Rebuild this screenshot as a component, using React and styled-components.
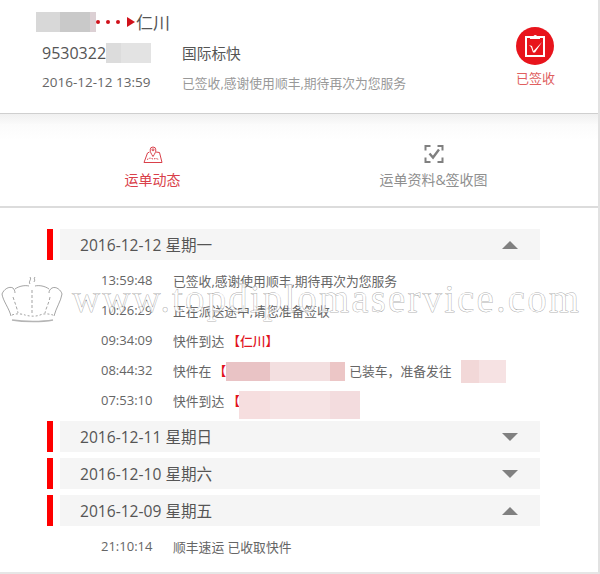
import React from 'react';
import styled, { createGlobalStyle } from 'styled-components';

const GlobalStyle = createGlobalStyle`
  html, body {
    margin: 0;
    background: #fff;
  }
  body {
    font-family: "Open Sans", "Noto Sans CJK SC", sans-serif;
    color: #555;
  }
`;

const Page = styled.div`
  position: relative;
  width: 598px;
  height: 572px;
  overflow: hidden;
  background: #fff;
  border-right: 2px solid #e2e2e2;
  border-bottom: 2px solid #e6e6e6;
`;

const Summary = styled.header`
  height: 114px;
  box-sizing: border-box;
  display: flex;
  justify-content: space-between;
  border-bottom: 1px solid #cfcfcf;
  padding: 10px 43px 0 36px;
`;

const SummaryInfo = styled.div`
  display: flex;
  flex-direction: column;
`;

const RouteRow = styled.div`
  display: flex;
  align-items: center;
  height: 23px;
  font-size: 17px;
  color: #555;
`;

const Dots = styled.span`
  display: flex;
  gap: 6px;
`;

const Dot = styled.span`
  width: 4px;
  height: 4px;
  border-radius: 50%;
  background: #d0111b;
`;

const RouteArrow = styled.span`
  margin: 0 1px 0 7px;
  border-left: 8px solid #d0111b;
  border-top: 5px solid transparent;
  border-bottom: 5px solid transparent;
`;

const Patch = styled.span`
  flex: none;
  display: inline-block;
  width: ${(p) => p.$w}px;
  height: ${(p) => p.$h}px;
  margin-left: ${(p) => p.$ml || 0}px;
  margin-top: ${(p) => p.$mt || 0}px;
  background: ${(p) => p.$fill};
`;

const InfoRow = styled.div`
  display: grid;
  grid-template-columns: 140px 1fr;
  align-items: center;
  padding-left: 6px;
  height: ${(p) => p.$h}px;
`;

const Waybill = styled.div`
  display: flex;
  align-items: center;
  font-size: 16px;
  color: #555;
`;

const ProductType = styled.div`
  font-size: 14.7px;
  color: #555;
`;

const SignedTime = styled.div`
  font-size: 13.5px;
  color: #666;
  white-space: nowrap;
`;

const SignedNote = styled.div`
  font-size: 12.8px;
  color: #999;
  white-space: nowrap;
`;

const Status = styled.div`
  display: flex;
  flex-direction: column;
  align-items: center;
  gap: 3px;
  padding-top: 17px;
  font-size: 13px;
  color: #e0605f;
`;

const Band = styled.div`
  height: 10px;
  background: linear-gradient(#f0f0f0, #fafafa);
`;

const Tabs = styled.nav`
  height: 84px;
  box-sizing: border-box;
  display: grid;
  grid-template-columns: 281px 281px;
  padding-left: 12px;
  border-bottom: 2px solid #dcdcdc;
  background: linear-gradient(#fbfbfb, #fff 20%);
`;

const Tab = styled.div`
  display: flex;
  flex-direction: column;
  align-items: center;
  gap: 5px;
  padding-top: 20px;
  font-size: 14px;
  color: ${(p) => (p.$active ? '#d9404a' : '#8f8f8f')};
  white-space: nowrap;
`;

const Timeline = styled.section`
  padding-top: 21px;
`;

const DayHead = styled.div`
  display: flex;
  gap: 7px;
  height: 31px;
  margin-left: 47px;
  margin-bottom: ${(p) => (p.$open ? 0 : 6)}px;
`;

const RedBar = styled.span`
  flex: none;
  width: 6px;
  background: #f00;
`;

const DayLabel = styled.div`
  width: 480px;
  box-sizing: border-box;
  display: flex;
  align-items: center;
  justify-content: space-between;
  padding: 0 22px 0 20px;
  background: #f5f5f5;
  font-size: 15.6px;
  color: #555;
`;

const Caret = styled.span`
  border-left: 8px solid transparent;
  border-right: 8px solid transparent;
  ${(p) => (p.$up ? 'border-bottom' : 'border-top')}: 8px solid #808080;
`;

const Events = styled.div`
  padding: 5px 0 6px;
`;

const EventRow = styled.div`
  display: flex;
  align-items: center;
  height: 30px;
  padding-left: 101px;
`;

const EventTime = styled.span`
  flex: none;
  width: 72px;
  font-size: 13px;
  color: #666;
`;

const EventText = styled.span`
  display: flex;
  align-items: center;
  font-size: 12.8px;
  color: #666;
  white-space: nowrap;
`;

const Place = styled.span`
  margin-left: ${(p) => p.$ml}px;
  color: #e1141e;
  font-weight: 500;
`;

const AfterText = styled.span`
  margin-left: 4px;
`;

const Watermark = styled.div`
  position: absolute;
  left: 0;
  top: 270px;
  display: flex;
  align-items: flex-end;
  gap: 8px;
  pointer-events: none;
`;

const WatermarkText = styled.span`
  font-family: "Liberation Serif", serif;
  font-size: 39px;
  line-height: 50px;
  letter-spacing: 2.1px;
  white-space: nowrap;
  color: rgba(255, 255, 255, 0.8);
  -webkit-text-stroke: 0.25px #666;
`;

const SignedIcon = () => (
  <svg width="38" height="38" viewBox="0 0 38 38">
    <circle cx="19" cy="19" r="19" fill="#e8141c" />
    <path d="M10 10h18v19H10z" fill="none" stroke="#fff" strokeWidth="2" />
    <path d="M14 11v-2h3.5a2 2 0 0 1 3.5 0H24v3H14z" fill="#fff" />
    <path d="M13 18l3 1 1.5 5L26 15l-7 10.5h-2L15 20z" fill="#fff" />
  </svg>
);

const MapPinIcon = () => (
  <svg width="20" height="20" viewBox="0 0 20 20" fill="none" stroke="#d9404a" strokeWidth="1">
    <path d="M6.5 8L4.5 9 1 18.5h18L16.5 8.5 13 8" />
    <path d="M10 12.5C8 9.5 7.2 8 7.2 5.8a2.8 2.8 0 0 1 5.6 0C12.8 8 12 9.5 10 12.5z" />
    <circle cx="10" cy="5.8" r="1" />
    <path d="M4 15.5l3-1.5 3 1 3-.5 3 1" strokeDasharray="1.5 1" />
  </svg>
);

const ScanCheckIcon = () => (
  <svg width="20" height="20" viewBox="0 0 20 20" fill="none" stroke="#808080" strokeWidth="2">
    <path d="M1.5 6.5V2h5M13.5 2h5v4.5M18.5 13.5V18h-5M6.5 18h-5v-4.5" />
    <path d="M5.5 9.5l3.5 4 6-8" strokeWidth="2.4" />
  </svg>
);

const CrownMark = () => (
  <svg width="64" height="54" viewBox="0 0 64 54" fill="none" stroke="#666" strokeWidth="0.6">
    <path d="M2 24c1 7 7 14 9 22M62 24c-1 7-6 14-8 22" />
    <path d="M2 24c2-5 7-8 11-6 1 1 2 3 2 5M62 24c-1-4-6-8-10-6-2 1-3 3-3 5" />
    <path d="M15 19c4-3 10-4 14-3M49 19c-4-3-10-4-14-3" />
    <path d="M12 50c12 2 30 2 41 0" stroke="#b5b5b5" strokeWidth="1.4" />
    <path d="M30 14c-2-3 2-4 0-7M34 12c2-3-1-3 1-5" />
    <path d="M13 27c2 6 4 11 5 16M32 20v24M50 27c-1 6-4 11-5 16" strokeDasharray="3 2" />
    <path d="M12 45c5-2 10-1 13 0s10 2 15 0 9-1 13 0" strokeDasharray="2 2" />
  </svg>
);

const days = [
  {
    label: '2016-12-12 星期一',
    open: true,
    events: [
      { time: '13:59:48', text: '已签收,感谢使用顺丰,期待再次为您服务' },
      { time: '10:26:29', text: '正在派送途中,请您准备签收' },
      { time: '09:34:09', text: '快件到达', place: '【仁川】', placeGap: 3 },
      {
        time: '08:44:32',
        text: '快件在',
        place: '【',
        placeGap: 2,
        patch: { $w: 119, $h: 19, $mt: 2, $fill: 'linear-gradient(90deg, #e9c3c5 37%, #f3dfe0 37% 87%, #ecc6c6 87%)' },
        after: '已装车，准备发往',
        patch2: { $w: 45, $h: 23, $ml: 9, $mt: 2, $fill: 'linear-gradient(90deg, #f2d8d8 40%, #f6e2e3 40%)' },
      },
      {
        time: '07:53:10',
        text: '快件到达',
        place: '【',
        placeGap: 3,
        patch: { $w: 121, $h: 28, $ml: -1, $mt: 10, $fill: 'linear-gradient(90deg, #f6dedf 26%, #f6e3e4 26% 75%, #f3dcde 75%)' },
      },
    ],
  },
  { label: '2016-12-11 星期日' },
  { label: '2016-12-10 星期六' },
  {
    label: '2016-12-09 星期五',
    open: true,
    events: [{ time: '21:10:14', text: '顺丰速运 已收取快件' }],
  },
];

function App() {
  return (
    <Page>
      <GlobalStyle />
      <Summary>
        <SummaryInfo>
          <RouteRow>
            <Patch $w={60} $h={20} $fill="linear-gradient(90deg, #d8d8d8 40%, #c9c9c9 40% 90%, #dcd0d4 90%)" />
            <Dots>
              <Dot />
              <Dot />
              <Dot />
            </Dots>
            <RouteArrow />
            仁川
          </RouteRow>
          <InfoRow $h={39}>
            <Waybill>
              9530322
              <Patch $w={45} $h={20} $fill="linear-gradient(90deg, #dcdcdc 33%, #e3e3e3 33%)" />
            </Waybill>
            <ProductType>国际标快</ProductType>
          </InfoRow>
          <InfoRow $h={20}>
            <SignedTime>2016-12-12 13:59</SignedTime>
            <SignedNote>已签收,感谢使用顺丰,期待再次为您服务</SignedNote>
          </InfoRow>
        </SummaryInfo>
        <Status>
          <SignedIcon />
          已签收
        </Status>
      </Summary>
      <Band />
      <Tabs>
        <Tab $active>
          <MapPinIcon />
          运单动态
        </Tab>
        <Tab>
          <ScanCheckIcon />
          运单资料&amp;签收图
        </Tab>
      </Tabs>
      <Timeline>
        {days.map((day) => (
          <div key={day.label}>
            <DayHead $open={day.open}>
              <RedBar />
              <DayLabel>
                {day.label}
                <Caret $up={day.open} />
              </DayLabel>
            </DayHead>
            {day.events && (
              <Events>
                {day.events.map((ev) => (
                  <EventRow key={ev.time}>
                    <EventTime>{ev.time}</EventTime>
                    <EventText>
                      {ev.text}
                      {ev.place && <Place $ml={ev.placeGap}>{ev.place}</Place>}
                      {ev.patch && <Patch {...ev.patch} />}
                      {ev.after && <AfterText>{ev.after}</AfterText>}
                      {ev.patch2 && <Patch {...ev.patch2} />}
                    </EventText>
                  </EventRow>
                ))}
              </Events>
            )}
          </div>
        ))}
      </Timeline>
      <Watermark>
        <CrownMark />
        <WatermarkText>www.topdiplomaservice.com</WatermarkText>
      </Watermark>
    </Page>
  );
}

export default App;
